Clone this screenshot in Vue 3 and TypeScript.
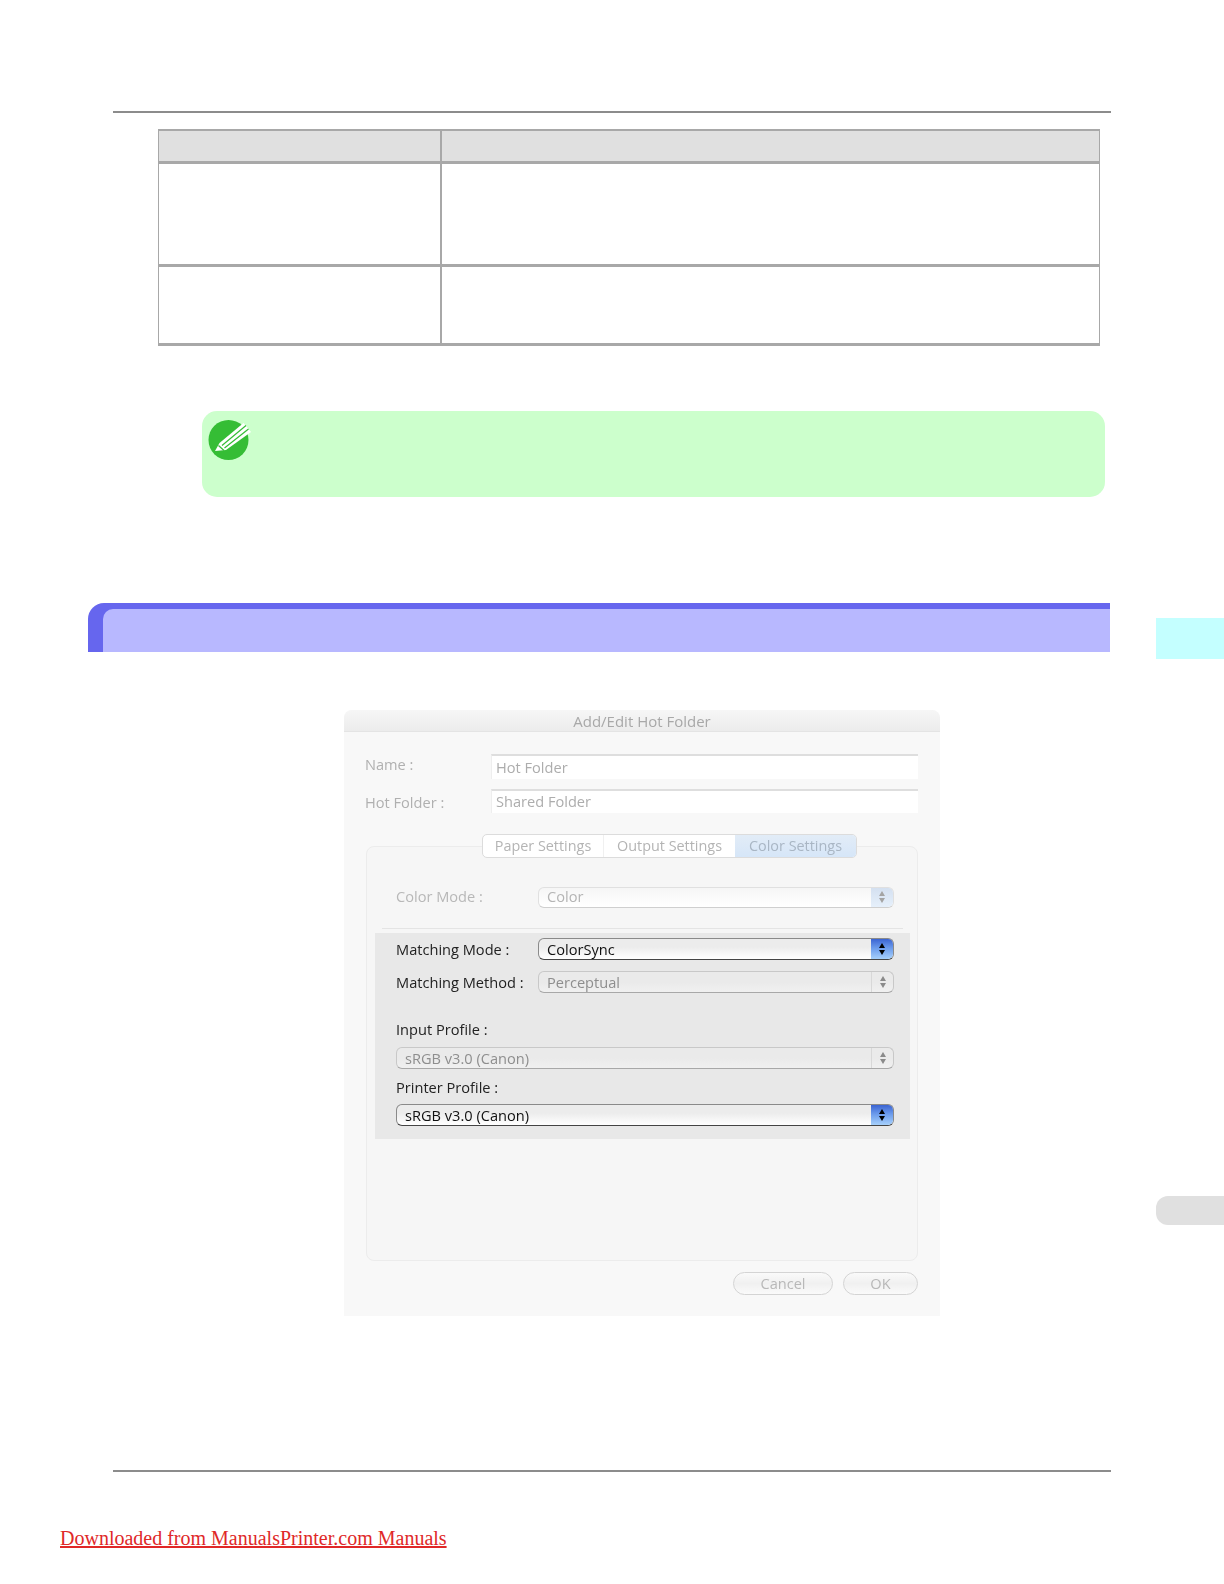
<script setup lang="ts">
interface Sel { label: string; value: string; on: boolean }
const band1: Sel[] = [
  { label: 'Matching Mode :', value: 'ColorSync', on: true },
  { label: 'Matching Method :', value: 'Perceptual', on: false },
]
</script>

<template>
  <div class="page">
    <main class="main">
      <div class="rule rule-top"></div>
      <div class="table">
        <div class="cell head"></div><div class="cell head"></div>
        <div class="cell r1"></div><div class="cell r1"></div>
        <div class="cell r2"></div><div class="cell r2"></div>
      </div>

      <div class="note">
        <svg class="note-icon" width="48" height="48" viewBox="0 0 48 48">
          <circle cx="21.5" cy="22" r="20" fill="#35bd35" />
          <polygon points="8,33 12.5,25 36.5,5 44,14 19,32" fill="#ffffff" />
          <path d="M15 27.5 39 7.5M17.5 30 41.5 11M11.5 27.5 17 32.5" stroke="#35bd35" stroke-width="1.2" fill="none" />
        </svg>
      </div>

      <div class="heading"><div class="heading-inner"></div></div>

      <section class="dialog">
        <div class="titlebar">Add/Edit Hot Folder</div>
        <div class="form">
          <div class="field f1"><span class="flabel">Name :</span><div class="input">Hot Folder</div></div>
          <div class="field f2"><span class="flabel">Hot Folder :</span><div class="input">Shared Folder</div></div>
        </div>

        <div class="panel">
          <div class="tabs">
            <span class="tab t1">Paper Settings</span>
            <span class="tab t2">Output Settings</span>
            <span class="tab t3">Color Settings</span>
          </div>

          <div class="row color-row">
            <span class="rlabel faded">Color Mode :</span>
            <div class="select faint">
              <span class="val">Color</span>
              <span class="arrows"><i class="up"></i><i class="down"></i></span>
            </div>
          </div>
          <div class="sep"></div>

          <div class="band">
            <div v-for="s in band1" :key="s.label" class="row band-row">
              <span class="rlabel">{{ s.label }}</span>
              <div class="select" :class="s.on ? 'on' : 'off'">
                <span class="val">{{ s.value }}</span>
                <span class="arrows"><i class="up"></i><i class="down"></i></span>
              </div>
            </div>
            <div class="plabel pl1">Input Profile :</div>
            <div class="select wide off">
              <span class="val">sRGB v3.0 (Canon)</span>
              <span class="arrows"><i class="up"></i><i class="down"></i></span>
            </div>
            <div class="plabel pl2">Printer Profile :</div>
            <div class="select wide on">
              <span class="val">sRGB v3.0 (Canon)</span>
              <span class="arrows"><i class="up"></i><i class="down"></i></span>
            </div>
          </div>
        </div>

        <div class="buttons">
          <span class="btn cancel">Cancel</span>
          <span class="btn ok">OK</span>
        </div>
      </section>

      <div class="rule rule-bottom"></div>
      <a class="link">Downloaded from ManualsPrinter.com Manuals</a>
    </main>

    <aside class="side">
      <div class="side-cyan"></div>
      <div class="side-grey"></div>
    </aside>
  </div>
</template>

<style scoped>
.page {
  width: 1224px;
  height: 1584px;
  display: grid;
  grid-template-columns: 1156px 68px;
  background: #fff;
  overflow: hidden;
}
.main { display: flex; flex-direction: column; align-items: flex-start; }
.rule { width: 998px; height: 2px; background: #8c8c8c; margin-left: 113px; }
.rule-top { margin-top: 111px; }
.rule-bottom { margin-top: 154px; }

.table {
  margin: 16px 0 0 158px;
  width: 942px;
  display: grid;
  grid-template-columns: 282px 660px;
  grid-template-rows: 33px 103px 79px;
  border-top: 2px solid #a8a8a8;
  box-sizing: border-box;
}
.cell {
  border-left: 1px solid #a8a8a8;
  border-bottom: 3px solid #a8a8a8;
  box-sizing: border-box;
}
.cell:nth-child(even) { border-left-width: 2px; border-right: 1px solid #a8a8a8; }
.head { background: #e0e0e0; }

.note {
  margin: 65px 0 0 202px;
  width: 903px;
  height: 86px;
  box-sizing: border-box;
  padding: 7px 0 0 5px;
  background: #ccffcc;
  border-radius: 15px;
}
.note-icon { display: block; }

.heading {
  margin: 106px 0 0 88px;
  width: 1022px;
  height: 49px;
  box-sizing: border-box;
  padding: 6px 0 0 15px;
  background: #6666ee;
  border-radius: 16px 0 0 0;
}
.heading-inner { height: 100%; background: #b8b8ff; border-radius: 10px 0 0 0; }

.dialog {
  margin: 58px 0 0 344px;
  width: 596px;
  height: 606px;
  box-sizing: border-box;
  background: #f8f8f8;
  border-radius: 8px 8px 0 0;
  font-family: "Open Sans", "DejaVu Sans", sans-serif;
  font-size: 14.6px;
  color: #aaaaaa;
  filter: blur(0.35px);
}
.titlebar {
  height: 22px;
  line-height: 22px;
  text-align: center;
  font-size: 15px;
  border-radius: 8px 8px 0 0;
  background: linear-gradient(#f6f6f6, #ececec);
  border-bottom: 1px solid #e4e4e4;
  box-sizing: border-box;
  color: #a8a8a8;
}
.form { padding: 22px 22px 0 21px; }
.field { display: flex; }
.f1 { height: 25px; }
.f2 { height: 24px; margin-top: 10px; }
.flabel { width: 126px; line-height: 21px; color: #b0b0b0; }
.f2 .flabel { line-height: 26px; }
.input {
  flex: 1;
  box-sizing: border-box;
  background: #fff;
  border-top: 2px solid #dedede;
  border-left: 1px solid #eeeeee;
  padding-left: 4px;
  line-height: 23px;
  color: #adadad;
}
.f2 .input { line-height: 21px; }

.panel {
  margin: 33px 22px 0 22px;
  height: 415px;
  box-sizing: border-box;
  border: 1px solid #ececec;
  border-radius: 8px;
  background: #f6f6f6;
}
.tabs {
  margin: -13px 0 0 115px;
  width: 375px;
  height: 24px;
  display: flex;
  box-sizing: border-box;
  border: 1px solid #dcdcdc;
  border-radius: 5px;
  background: #fff;
  overflow: hidden;
  color: #b4b4b4;
  font-size: 14.4px;
}
.tab { line-height: 22px; text-align: center; box-sizing: border-box; }
.t1 { width: 121px; border-right: 1px solid #f0f0f0; }
.t2 { width: 131px; }
.t3 { flex: 1; background: linear-gradient(#e2ecf7, #d6e6f8); color: #a9b6c4; }

.row { display: flex; align-items: center; }
.rlabel { width: 142px; color: #222; white-space: nowrap; }
.rlabel.faded { color: #b8b8b8; padding-bottom: 2px; }
.color-row { margin: 28px 0 0 29px; }

.select {
  width: 356px;
  height: 22px;
  box-sizing: border-box;
  display: flex;
  align-items: center;
  justify-content: space-between;
  border-radius: 6px;
  border: 1px solid #bbb;
  padding-left: 8px;
  overflow: hidden;
}
.val { line-height: 20px; }
.faint .val { padding-bottom: 2px; }
.arrows {
  width: 22px;
  height: 100%;
  display: flex;
  flex-direction: column;
  align-items: center;
  justify-content: center;
  gap: 2px;
}
.arrows i { display: block; width: 0; height: 0; border-left: 3px solid transparent; border-right: 3px solid transparent; }
.up { border-bottom: 5px solid #000; }
.down { border-top: 5px solid #000; }

.faint {
  height: 21px;
  border-color: #e0e0e0;
  border-bottom-color: #cfcfcf;
  background: linear-gradient(#f6f6f6, #fff);
  color: #b4b4b4;
}
.faint .arrows { background: linear-gradient(#d4e0f0, #e6f0fb); }
.faint .up { border-bottom-color: #a4a4a4; }
.faint .down { border-top-color: #a4a4a4; }

.on {
  border-color: #8a8a8a #8a8a8a #444;
  background: linear-gradient(#ececec 40%, #fff);
  color: #111;
}
.on .arrows { background: linear-gradient(#3b64d2, #6b9bec 45%, #a6d0fb); }
.off {
  border-color: #c8c8c8 #c8c8c8 #a8a8a8;
  background: linear-gradient(#eaeaea 50%, #f0f0f0);
  color: #8e8e8e;
}
.off .arrows { border-left: 1px solid #d8d8d8; box-sizing: border-box; }
.off .up { border-bottom-color: #8a8a8a; }
.off .down { border-top-color: #8a8a8a; }

.sep { margin: 20px 0 0 15px; width: 521px; height: 1px; background: #e4e4e4; }

.band {
  margin: 4px 0 0 8px;
  width: 535px;
  height: 206px;
  box-sizing: border-box;
  padding: 5px 16px 0 21px;
  background: #e8e8e8;
}
.band-row + .band-row { margin-top: 11px; }
.plabel { height: 18px; line-height: 16px; color: #222; }
.pl1 { margin-top: 28px; }
.pl2 { margin-top: 10px; height: 17px; }
.wide { width: 498px; margin-top: 8px; }

.buttons { display: flex; justify-content: flex-end; gap: 10px; margin: 11px 22px 0 0; }
.btn {
  height: 23px;
  line-height: 21px;
  box-sizing: border-box;
  text-align: center;
  border: 1px solid #d4d4d4;
  border-radius: 12px;
  background: linear-gradient(#fafafa, #f0f0f0 50%, #fafafa);
  color: #b8b8b8;
}
.cancel { width: 100px; }
.ok { width: 75px; }

.link {
  margin: 54px 0 0 60px;
  font-family: "Liberation Serif", serif;
  font-size: 20px;
  line-height: 24px;
  color: #e02828;
  text-decoration: underline;
}

.side { display: flex; flex-direction: column; }
.side-cyan { margin-top: 618px; height: 41px; background: #c4ffff; }
.side-grey { margin-top: 537px; height: 29px; background: #e0e0e0; border-radius: 12px 0 0 12px; }
</style>
